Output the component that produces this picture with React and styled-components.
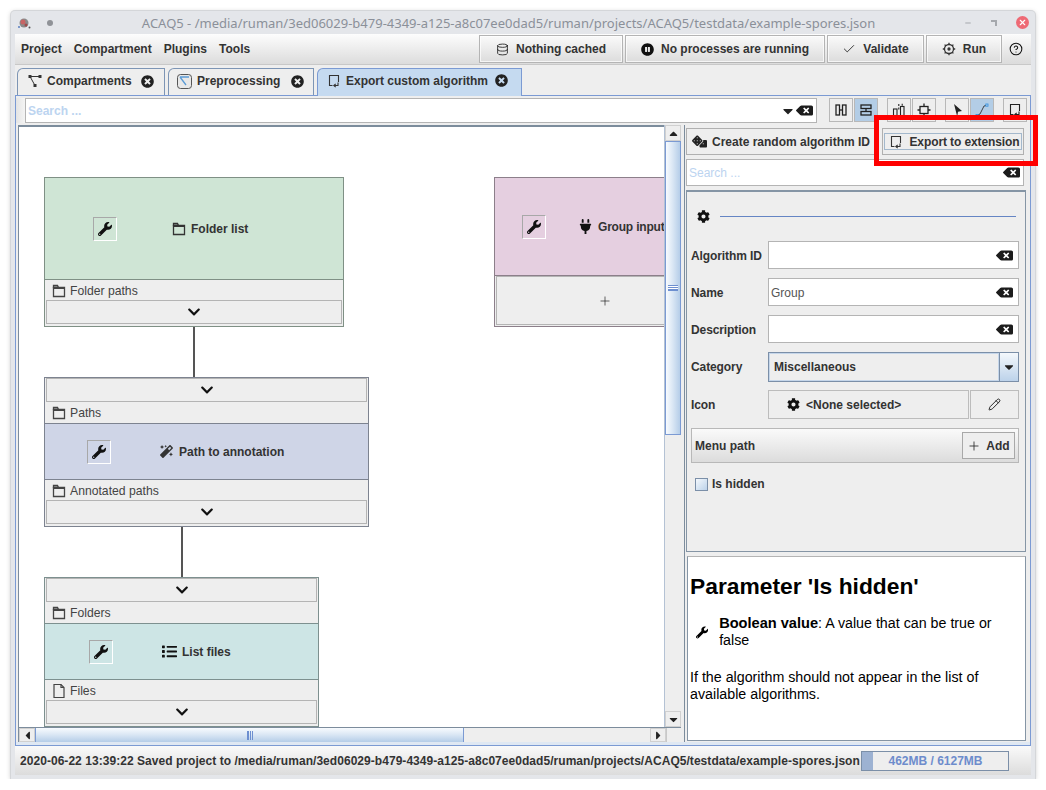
import React from "react";
import styled, { createGlobalStyle } from "styled-components";
import {
  FaWrench,
  FaCog,
  FaChevronDown,
  FaPlug,
  FaBackspace,
  FaList,
  FaDice,
  FaPauseCircle,
  FaMagic,
  FaTimesCircle,
  FaCaretDown,
  FaCaretUp,
  FaCaretLeft,
  FaCaretRight,
} from "react-icons/fa";
import { Check, Plus, CircleHelp, Database, Pencil, X, Minus } from "lucide-react";

const GlobalStyle = createGlobalStyle`
  html, body {
    margin: 0;
    padding: 0;
    background: #fff;
    font-family: "Liberation Sans", Arial, sans-serif;
    font-size: 12px;
    color: #333;
  }
  * { box-sizing: border-box; }
`;

const Window = styled.div`
  width: 1024px;
  height: 768px;
  margin: 11px 0 0 11px;
  display: flex;
  flex-direction: column;
  background: #e4e6ea;
  border-radius: 4px 4px 0 0;
  box-shadow: 0 0 0 1px #d4d6d9, 0 1px 5px rgba(0, 0, 0, 0.25);
  padding: 0 4px 4px;
`;

const TitleBar = styled.div`
  height: 23px;
  flex: none;
  display: flex;
  align-items: center;
  padding-left: 2px;
  color: #8b9099;
  font-family: "Noto Sans", sans-serif;
  font-size: 13px;
`;

const TitleDot = styled.span`
  width: 6px;
  height: 6px;
  border-radius: 50%;
  background: #8f9297;
  margin-left: 16px;
`;

const TitleText = styled.div`
  flex: 1;
  text-align: center;
  white-space: nowrap;
`;

const WinButtons = styled.div`
  display: flex;
  align-items: center;
  gap: 19px;
  margin-right: 2px;
  color: #a5a8ad;
`;

const CloseDot = styled.span`
  width: 13px;
  height: 13px;
  border-radius: 50%;
  background: #ee6a75;
  color: #fff;
  display: flex;
  align-items: center;
  justify-content: center;
`;

const Restore = styled.span`
  width: 6px;
  height: 6px;
  border-top: 2px solid #a5a8ad;
  border-right: 2px solid #a5a8ad;
`;

const MenuBar = styled.div`
  height: 31px;
  flex: none;
  display: flex;
  align-items: flex-start;
  padding-top: 1px;
  background: linear-gradient(#fdfdfd, #dcdcdc);
  border-bottom: 1px solid #c8c8c8;
`;

const MenuItems = styled.div`
  flex: 1;
  display: flex;
  gap: 12px;
  padding: 7px 0 0 6px;
  font-weight: bold;
  line-height: 14px;
`;

const TopButton = styled.div`
  width: ${(p) => p.$w}px;
  height: 28px;
  margin-left: 2px;
  display: flex;
  align-items: center;
  justify-content: center;
  gap: 7px;
  font-weight: bold;
  border: 1px solid #b4b4b4;
  box-shadow: inset 0 0 0 1px rgba(255, 255, 255, 0.7);
  background: linear-gradient(#fafafa, #dcdcdc);
  color: #333;
`;

const HelpButton = styled(TopButton)`
  border: none;
  box-shadow: none;
  padding-right: 3px;
  color: #111;
`;

const TabRow = styled.div`
  height: 30px;
  flex: none;
  display: flex;
  align-items: flex-end;
  gap: 3px;
  padding-left: 2px;
  background: #eeeeee;
`;

const Tab = styled.div`
  width: ${(p) => p.$w}px;
  height: ${(p) => (p.$active ? 28 : 27)}px;
  display: flex;
  align-items: center;
  gap: 5px;
  padding: 0 0 ${(p) => (p.$active ? 4 : 2)}px ${(p) => p.$pad}px;
  font-weight: bold;
  color: #333;
  background: ${(p) => (p.$active ? "#c5daf0" : "#eeeeee")};
  border: 1px solid #7d95b5;
  border-bottom: none;
  border-top-left-radius: 6px;
  ${(p) => p.$active && "border-color: #7b9ad3; margin-bottom: -1px; z-index: 1;"}
`;

const TabClose = styled.span`
  display: flex;
  margin-left: ${(p) => p.$gap}px;
  color: #222;
`;

const ContentPanel = styled.div`
  height: 651px;
  flex: none;
  display: flex;
  flex-direction: column;
  background: #dfe8f3;
  border: 1px solid #7b9ad3;
`;

const Toolbar = styled.div`
  height: 29px;
  flex: none;
  display: flex;
  align-items: flex-start;
  padding-top: 2px;
  background: #eeeeee;
`;

const Grip = styled.div`
  width: 9px;
  height: 25px;
  background: linear-gradient(90deg, #e4e4e4, #f4f4f4);
`;

const SearchBox = styled.div`
  width: ${(p) => p.$w}px;
  height: ${(p) => p.$h}px;
  flex: none;
  display: flex;
  align-items: center;
  padding: 0 3px 0 2px;
  background: #fff;
  border: 1px solid #b4b4b4;
`;

const Placeholder = styled.span`
  flex: 1;
  color: #bcd4f0;
  font-weight: ${(p) => (p.$bold ? "bold" : "normal")};
`;

const ToolGroup = styled.div`
  display: flex;
  gap: 1px;
  margin-left: ${(p) => p.$ml}px;
`;

const ToolButton = styled.div`
  width: 24px;
  height: 24px;
  display: flex;
  align-items: center;
  justify-content: center;
  background: ${(p) => (p.$on ? "#b3cde6" : "#eeeeee")};
  border: 1px solid #b8b8b8;
  color: #222;
`;

const Main = styled.div`
  height: 617px;
  flex: none;
  display: flex;
  padding-left: 2px;
  background: #eeeeee;
`;

const LeftColumn = styled.div`
  width: 663px;
  flex: none;
  display: flex;
  flex-direction: column;
  border-left: 1px solid #7c8c9c;
`;

const CanvasRow = styled.div`
  height: 602px;
  flex: none;
  display: flex;
`;

const Canvas = styled.div`
  position: relative;
  flex: 1;
  overflow: hidden;
  background: #fff;
  border-top: 2px solid #7c8c9c;
`;

const Node = styled.div`
  position: absolute;
  left: ${(p) => p.$x}px;
  top: ${(p) => p.$y}px;
  width: ${(p) => p.$w}px;
  height: ${(p) => p.$h}px;
  display: flex;
  flex-direction: column;
  background: #eeeeee;
  border: 1px solid ${(p) => p.$line};
`;

const NodeHeader = styled.div`
  height: ${(p) => p.$h}px;
  flex: none;
  display: flex;
  align-items: center;
  gap: ${(p) => p.$gap}px;
  padding-left: ${(p) => p.$pad}px;
  background: ${(p) => p.$bg};
  font-weight: bold;
  color: #333;
  border-bottom: 1px solid ${(p) => p.$line};
  border-top: ${(p) => (p.$top ? `1px solid ${p.$line}` : "none")};
  white-space: nowrap;
`;

const WrenchButton = styled.div`
  width: 24px;
  height: 24px;
  flex: none;
  display: flex;
  align-items: center;
  justify-content: center;
  border: 1px solid;
  border-color: #a8a8a8 #fff #fff #a8a8a8;
  color: #111;
`;

const NodeTitle = styled.span`
  display: flex;
  align-items: center;
  gap: ${(p) => p.$gap || 5}px;
  letter-spacing: ${(p) => (p.$tight ? "-0.2px" : "normal")};
`;

const Slot = styled.div`
  height: ${(p) => p.$h || 20}px;
  flex: none;
  display: flex;
  align-items: center;
  gap: 4px;
  padding: 1px 0 0 7px;
  color: #444;
  font-size: 12.2px;
`;

const SlotButton = styled.div`
  height: ${(p) => p.$h || 24}px;
  flex: none;
  margin: 0 1px;
  display: flex;
  align-items: center;
  justify-content: center;
  padding-right: ${(p) => p.$shift || 0}px;
  background: #eeeeee;
  border: 1px solid #b4b4b4;
  color: #111;
`;

const Edge = styled.div`
  position: absolute;
  left: ${(p) => p.$x}px;
  top: ${(p) => p.$y}px;
  width: 2px;
  height: 50px;
  background: #555;
`;

const VScroll = styled.div`
  width: 17px;
  flex: none;
  display: flex;
  flex-direction: column;
  background: #eeeeee;
  border-left: 1px solid #b4c2d4;
`;

const ArrowButton = styled.div`
  width: ${(p) => p.$w || 16}px;
  height: ${(p) => p.$h || 16}px;
  flex: none;
  display: flex;
  align-items: center;
  justify-content: center;
  background: #eeeeee;
  color: #222;
  border: 1px solid #d0d0d0;
`;

const VThumb = styled.div`
  height: 294px;
  flex: none;
  display: flex;
  align-items: center;
  justify-content: center;
  background: linear-gradient(90deg, #f8fbfe, #dce8f5 45%, #b5cde8);
  border: 1px solid #7b9ad3;
`;

const GripV = styled.div`
  width: 10px;
  height: 6px;
  border-top: 1px solid #6d8fd0;
  border-bottom: 1px solid #6d8fd0;
  background: linear-gradient(#fff 1px, #6d8fd0 1px, #6d8fd0 2px, #fff 2px);
  background-size: 100% 2px;
`;

const Track = styled.div`
  flex: 1;
`;

const HScroll = styled.div`
  height: 15px;
  flex: none;
  display: flex;
  background: #eeeeee;
  border-top: 1px solid #7c8c9c;
`;

const HThumb = styled.div`
  width: 429px;
  flex: none;
  display: flex;
  align-items: center;
  justify-content: center;
  background: linear-gradient(#f8fbfe, #dce8f5 45%, #b5cde8);
  border: 1px solid #7b9ad3;
  border-width: 0 1px;
`;

const GripH = styled.div`
  width: 6px;
  height: 9px;
  border-left: 1px solid #6d8fd0;
  border-right: 1px solid #6d8fd0;
  background: linear-gradient(90deg, #6d8fd0 1px, transparent 1px);
  background-size: 2px 100%;
`;

const Corner = styled.div`
  width: 15px;
  flex: none;
  border-left: 1px solid #c8c8c8;
`;

const RightColumn = styled.div`
  width: 345px;
  flex: none;
  margin-left: 3px;
  padding: 3px 0 0 1px;
  display: flex;
  flex-direction: column;
  border-left: 1px solid #7c8c9c;
`;

const ButtonRow = styled.div`
  height: 27px;
  flex: none;
  display: flex;
  gap: 6px;
  margin-bottom: 4px;
`;

const PlainButton = styled.div`
  width: ${(p) => p.$w}px;
  flex: none;
  display: flex;
  align-items: center;
  justify-content: center;
  gap: 5px;
  font-weight: bold;
  white-space: nowrap;
  background: #eeeeee;
  border: 1px solid #b0b0b0;
  color: #333;
`;

const FocusRing = styled.div`
  display: flex;
  align-items: center;
  gap: 6px;
  height: 17px;
  padding: 0 1px 0 4px;
  letter-spacing: -0.1px;
  border: 1px solid #a3b8cc;
`;

const FormPanel = styled.div`
  width: 340px;
  height: 362px;
  flex: none;
  margin-top: 4px;
  padding: 0 6px 0 4px;
  background: #eeeeee;
  border: 1px solid #8595a5;
  border-top-width: 2px;
`;

const SectionHead = styled.div`
  height: 49px;
  display: flex;
  align-items: center;
  gap: 10px;
  padding: 2px 3px 2px 6px;
  color: #111;
`;

const SectionLine = styled.div`
  flex: 1;
  height: 1px;
  background: #6585c4;
`;

const FormRow = styled.div`
  height: ${(p) => p.$h}px;
  margin-bottom: ${(p) => p.$mb}px;
  display: flex;
  align-items: center;
`;

const FieldLabel = styled.div`
  width: 77px;
  flex: none;
  padding-top: ${(p) => (p.$nudge ? 1 : 0)}px;
  font-weight: bold;
  letter-spacing: -0.1px;
  color: #333;
`;

const TextField = styled.div`
  flex: 1;
  height: 100%;
  display: flex;
  align-items: center;
  padding: 0 5px 0 2px;
  background: #fff;
  border: 1px solid #b4b4b4;
  color: #555;
`;

const FieldValue = styled.span`
  flex: 1;
  padding-top: 1px;
`;

const ComboBox = styled.div`
  flex: 1;
  height: 100%;
  display: flex;
  background: #eeeeee;
  border: 1px solid #7b8fa8;
  font-weight: bold;
`;

const ComboValue = styled.div`
  flex: 1;
  display: flex;
  align-items: center;
  padding-left: 5px;
  box-shadow: inset 0 0 0 1px #c5d6ea;
`;

const ComboArrow = styled.div`
  width: 19px;
  flex: none;
  display: flex;
  align-items: center;
  justify-content: center;
  background: linear-gradient(#f4f8fc, #bcd2ea);
  border-left: 1px solid #7b8fa8;
  color: #222;
`;

const IconPicker = styled.div`
  flex: 1;
  height: 100%;
  display: flex;
  align-items: center;
  gap: 6px;
  padding-left: 18px;
  font-weight: bold;
  border: 1px solid #bcbcbc;
  color: #333;
`;

const IconEdit = styled.div`
  width: 49px;
  height: 100%;
  flex: none;
  margin-left: 1px;
  display: flex;
  align-items: center;
  justify-content: center;
  color: #222;
  border: 1px solid #bcbcbc;
`;

const MenuPath = styled.div`
  height: 35px;
  margin-bottom: 14px;
  display: flex;
  align-items: center;
  justify-content: space-between;
  padding: 0 3px 0 3px;
  font-weight: bold;
  background: linear-gradient(#fafafa, #dcdcdc);
  border: 1px solid #b8b8b8;
`;

const AddButton = styled.div`
  width: 53px;
  height: 27px;
  display: flex;
  align-items: center;
  justify-content: center;
  gap: 5px;
  background: #eeeeee;
  border: 1px solid #a8a8a8;
`;

const CheckRow = styled.div`
  display: flex;
  align-items: center;
  gap: 4px;
  padding-left: 4px;
  font-weight: bold;
`;

const CheckBox = styled.span`
  width: 13px;
  height: 13px;
  background: linear-gradient(135deg, #f4f8fc, #bcd2ea);
  border: 1px solid #7b8fa8;
`;

const HelpPanel = styled.div`
  width: 339px;
  height: 185px;
  flex: none;
  margin: 4px 0 0 1px;
  padding: 16px 20px 0 2px;
  background: #fff;
  color: #000;
  font-size: 14.25px;
  line-height: 17px;
  border: 1px solid #8595a5;
  border-top-color: #b4b4b4;
`;

const HelpTitle = styled.h1`
  margin: 0 0 15px;
  font-size: 22.8px;
  line-height: 27px;
  font-weight: bold;
`;

const ParamRow = styled.div`
  display: flex;
  align-items: center;
  gap: 11px;
  padding-left: 6px;
  margin-bottom: 20px;
`;

const HelpText = styled.p`
  margin: 0;

  b {
    font-size: 14.6px;
  }
`;

const StatusBar = styled.div`
  flex: 1;
  display: flex;
  align-items: center;
  padding: 1px 0 0 5px;
  font-weight: bold;
  white-space: nowrap;
  color: #333;
  background: linear-gradient(#fafafa, #dcdcdc);
`;

const StatusText = styled.div`
  width: 841px;
  flex: none;
  overflow: hidden;
  letter-spacing: 0.045px;
`;

const MemoryBar = styled.div`
  width: 148px;
  height: 20px;
  display: flex;
  align-items: center;
  color: #6d8ccc;
  background: #eeeeee;
  border: 1px solid #7b8fa8;
`;

const MemoryFill = styled.div`
  height: 100%;
  background: #9db2d2;
`;

const MemoryText = styled.span`
  flex: 1;
  padding-right: 10px;
  text-align: center;
`;

// red marker drawn over the screenshot
const Highlight = styled.div`
  position: absolute;
  left: 874px;
  top: 115px;
  width: 164px;
  height: 51px;
  border: 5px solid #ff0000;
  pointer-events: none;
`;

const Line = ({ children, size = 14, sw = 1.3 }) => (
  <svg width={size} height={size} viewBox="0 0 14 14" fill="none" stroke="currentColor" strokeWidth={sw}>
    {children}
  </svg>
);

const FolderIcon = () => (
  <Line>
    <path d="M1.5 3.5h11v9h-11z" />
    <path d="M1.5 1.5h4l1 2h-5z" />
    <path d="M1.5 3.5h11v1.5h-11z" fill="currentColor" stroke="none" />
  </Line>
);

const FileIcon = () => (
  <svg width="14" height="16" viewBox="0 0 14 16" fill="none" stroke="currentColor" strokeWidth="1.2">
    <path d="M2 1.5h7l3 3v10h-10z" />
    <path d="M9 1.5v3h3" />
  </svg>
);

const ExportIcon = () => (
  <Line sw={1.1}>
    <path d="M11.5 8V1.5h-9v10h3" />
    <path d="M11 8.5v3H7M8.7 9.8L6.8 11.5l1.9 1.7" />
  </Line>
);

const GraphIcon = () => (
  <Line sw={1}>
    <path d="M2 2.5h10M2 2.5l5 9" />
    <rect x="1" y="1.5" width="2" height="2" fill="currentColor" />
    <rect x="11" y="1.5" width="2" height="2" fill="currentColor" />
    <rect x="6" y="10.5" width="2" height="2" fill="currentColor" />
  </Line>
);

const PipelineIcon = () => (
  <svg width="15" height="15" viewBox="0 0 15 15" fill="none">
    <rect x="0.5" y="0.5" width="14" height="14" rx="3" fill="#e8e8e8" stroke="#555" />
    <path d="M3 3h9M3 3l6 8" stroke="#5b9bd5" strokeWidth="1.3" />
  </svg>
);

const RunIcon = () => (
  <Line>
    <circle cx="7" cy="7" r="4.5" />
    <circle cx="7" cy="7" r="1" fill="currentColor" />
    <path d="M7 .8v1.7M7 11.5v1.7M.8 7h1.7M11.5 7h1.7M2.6 2.6l1.2 1.2M10.2 10.2l1.2 1.2M2.6 11.4l1.2-1.2M10.2 3.8l1.2-1.2" />
  </Line>
);

const AppIcon = () => (
  <svg width="14" height="14" viewBox="0 0 14 14">
    <circle cx="7" cy="7" r="4.5" fill="#8a8a8a" />
    <circle cx="6" cy="6" r="2.5" fill="#c86464" />
    <circle cx="9" cy="9" r="1.5" fill="#a04a4a" />
    <circle cx="2" cy="11" r="1" fill="#5b7fc0" />
    <circle cx="12.5" cy="11.5" r="1" fill="#555" />
  </svg>
);

const ClearIcon = ({ size = 17 }) => <FaBackspace size={size} color="#1c1c1c" />;

const ColumnsIcon = () => (
  <Line>
    <rect x="2" y="2" width="3.5" height="10" />
    <rect x="8.5" y="2" width="3.5" height="10" />
    <path d="M5.5 7h3" />
  </Line>
);

const RowsIcon = () => (
  <Line>
    <rect x="2" y="2" width="10" height="3.5" />
    <rect x="2" y="8.5" width="10" height="3.5" />
    <path d="M7 5.5v3" />
  </Line>
);

const AutoLayoutIcon = () => (
  <Line sw={1.1}>
    <rect x="1.5" y="6" width="3.5" height="6.5" />
    <rect x="8.5" y="3.5" width="3.5" height="9" />
    <path d="M6.8 1v2M6.8 4.5v2M10.2.8v2" />
  </Line>
);

const CenterIcon = () => (
  <Line>
    <rect x="3" y="3.5" width="8" height="7" />
    <path d="M7 .5v3M7 10.5v3M.5 7H3M11 7h2.5" />
  </Line>
);

const PointerIcon = () => (
  <svg width="14" height="14" viewBox="0 0 14 14">
    <path d="M4 1l8 7-4 .8-.8 4.7z" fill="#222" />
  </svg>
);

const CurveIcon = () => (
  <svg width="14" height="14" viewBox="0 0 14 14" fill="none">
    <path d="M3 12L5 11L9 3L11 2.5" stroke="#333" strokeWidth="0.9" />
    <rect x="1" y="11.5" width="2.2" height="2.2" stroke="#2f8fe0" strokeWidth="0.8" />
    <rect x="10.8" y="1" width="2.2" height="2.2" stroke="#2f8fe0" strokeWidth="0.8" />
  </svg>
);

const Wrench = () => (
  <WrenchButton>
    <FaWrench size={14} />
  </WrenchButton>
);

const Chevron = () => <FaChevronDown size={14} />;

const Canvasgraph = () => (
  <Canvas>
    <Edge $x={174} $y={200} />
    <Edge $x={162} $y={400} />

    <Node $x={25} $y={50} $w={300} $h={150} $line="#7f9085">
      <NodeHeader $h={102} $bg="#cfe5d5" $line="#7f9085" $pad={48} $gap={55}>
        <Wrench />
        <NodeTitle><FolderIcon />Folder list</NodeTitle>
      </NodeHeader>
      <Slot><FolderIcon />Folder paths</Slot>
      <SlotButton><Chevron /></SlotButton>
    </Node>

    <Node $x={25} $y={250} $w={325} $h={150} $line="#7d8390">
      <SlotButton><Chevron /></SlotButton>
      <Slot $h={21}><FolderIcon />Paths</Slot>
      <NodeHeader $h={57} $bg="#cfd5e7" $line="#7d8390" $top $pad={42} $gap={49}>
        <Wrench />
        <NodeTitle $gap={6}><FaMagic size={13} />Path to annotation</NodeTitle>
      </NodeHeader>
      <Slot><FolderIcon />Annotated paths</Slot>
      <SlotButton><Chevron /></SlotButton>
    </Node>

    <Node $x={25} $y={450} $w={275} $h={150} $line="#7d908f">
      <SlotButton><Chevron /></SlotButton>
      <Slot $h={21}><FolderIcon />Folders</Slot>
      <NodeHeader $h={57} $bg="#cde5e5" $line="#7d908f" $top $pad={44} $gap={49}>
        <Wrench />
        <NodeTitle><FaList size={15} color="#111" />List files</NodeTitle>
      </NodeHeader>
      <Slot><FileIcon />Files</Slot>
      <SlotButton><Chevron /></SlotButton>
    </Node>

    <Node $x={475} $y={50} $w={300} $h={150} $line="#8c7f8a">
      <NodeHeader $h={98} $bg="#e5cfe0" $line="#8c7f8a" $pad={27} $gap={32}>
        <Wrench />
        <NodeTitle $tight><FaPlug size={15} color="#111" />Group input</NodeTitle>
      </NodeHeader>
      <SlotButton $h={49} $shift={78}><Plus size={14} strokeWidth={1.2} color="#222" /></SlotButton>
    </Node>
  </Canvas>
);

export default function App() {
  return (
    <>
      <GlobalStyle />
      <Window>
        <TitleBar>
          <AppIcon />
          <TitleDot />
          <TitleText>
            ACAQ5 - /media/ruman/3ed06029-b479-4349-a125-a8c07ee0dad5/ruman/projects/ACAQ5/testdata/example-spores.json
          </TitleText>
          <WinButtons>
            <Minus size={8} strokeWidth={3} />
            <Restore />
            <CloseDot><X size={9} strokeWidth={3} /></CloseDot>
          </WinButtons>
        </TitleBar>

        <MenuBar>
          <MenuItems>
            <span>Project</span>
            <span>Compartment</span>
            <span>Plugins</span>
            <span>Tools</span>
          </MenuItems>
          <TopButton $w={144}><Database size={13} strokeWidth={1.6} color="#222" />Nothing cached</TopButton>
          <TopButton $w={200}><FaPauseCircle size={13} color="#111" />No processes are running</TopButton>
          <TopButton $w={97}><Check size={14} strokeWidth={1.5} color="#222" />Validate</TopButton>
          <TopButton $w={76}><RunIcon />Run</TopButton>
          <HelpButton $w={27}><CircleHelp size={14} strokeWidth={1.8} /></HelpButton>
        </MenuBar>

        <TabRow>
          <Tab $w={148} $pad={10}>
            <GraphIcon />Compartments
            <TabClose $gap={4}><FaTimesCircle size={13} /></TabClose>
          </Tab>
          <Tab $w={146} $pad={8}>
            <PipelineIcon />Preprocessing
            <TabClose $gap={6}><FaTimesCircle size={13} /></TabClose>
          </Tab>
          <Tab $w={205} $pad={9} $active>
            <ExportIcon />Export custom algorithm
            <TabClose $gap={2}><FaTimesCircle size={13} /></TabClose>
          </Tab>
        </TabRow>

        <ContentPanel>
          <Toolbar>
            <Grip />
            <SearchBox $w={792} $h={25}>
              <Placeholder $bold>Search ...</Placeholder>
              <FaCaretDown size={16} color="#222" />
              <ClearIcon />
            </SearchBox>
            <ToolGroup $ml={12}>
              <ToolButton><ColumnsIcon /></ToolButton>
              <ToolButton $on><RowsIcon /></ToolButton>
            </ToolGroup>
            <ToolGroup $ml={9}>
              <ToolButton><AutoLayoutIcon /></ToolButton>
              <ToolButton><CenterIcon /></ToolButton>
            </ToolGroup>
            <ToolGroup $ml={9}>
              <ToolButton><PointerIcon /></ToolButton>
              <ToolButton $on><CurveIcon /></ToolButton>
            </ToolGroup>
            <ToolGroup $ml={9}>
              <ToolButton><ExportIcon /></ToolButton>
            </ToolGroup>
          </Toolbar>

          <Main>
            <LeftColumn>
              <CanvasRow>
                <Canvasgraph />
                <VScroll>
                  <ArrowButton><FaCaretUp size={13} /></ArrowButton>
                  <VThumb><GripV /></VThumb>
                  <Track />
                  <ArrowButton><FaCaretDown size={13} /></ArrowButton>
                </VScroll>
              </CanvasRow>
              <HScroll>
                <ArrowButton $h={14}><FaCaretLeft size={13} /></ArrowButton>
                <HThumb><GripH /></HThumb>
                <Track />
                <ArrowButton $h={14}><FaCaretRight size={13} /></ArrowButton>
                <Corner />
              </HScroll>
            </LeftColumn>

            <RightColumn>
              <ButtonRow>
                <PlainButton $w={190}><FaDice size={15} color="#222" />Create random algorithm ID</PlainButton>
                <PlainButton $w={142}>
                  <FocusRing><ExportIcon />Export to extension</FocusRing>
                </PlainButton>
              </ButtonRow>
              <SearchBox $w={338} $h={27}>
                <Placeholder>Search ...</Placeholder>
                <ClearIcon />
              </SearchBox>

              <FormPanel>
                <SectionHead>
                  <FaCog size={13} />
                  <SectionLine />
                </SectionHead>
                <FormRow $h={28} $mb={9}>
                  <FieldLabel $nudge>Algorithm ID</FieldLabel>
                  <TextField><FieldValue /><ClearIcon /></TextField>
                </FormRow>
                <FormRow $h={28} $mb={9}>
                  <FieldLabel $nudge>Name</FieldLabel>
                  <TextField><FieldValue>Group</FieldValue><ClearIcon /></TextField>
                </FormRow>
                <FormRow $h={28} $mb={9}>
                  <FieldLabel $nudge>Description</FieldLabel>
                  <TextField><FieldValue /><ClearIcon /></TextField>
                </FormRow>
                <FormRow $h={30} $mb={8}>
                  <FieldLabel>Category</FieldLabel>
                  <ComboBox>
                    <ComboValue>Miscellaneous</ComboValue>
                    <ComboArrow><FaCaretDown size={14} /></ComboArrow>
                  </ComboBox>
                </FormRow>
                <FormRow $h={29} $mb={9}>
                  <FieldLabel>Icon</FieldLabel>
                  <IconPicker><FaCog size={13} color="#111" />&lt;None selected&gt;</IconPicker>
                  <IconEdit><Pencil size={13} strokeWidth={1.8} /></IconEdit>
                </FormRow>
                <MenuPath>
                  Menu path
                  <AddButton><Plus size={14} strokeWidth={1.4} color="#222" />Add</AddButton>
                </MenuPath>
                <CheckRow><CheckBox />Is hidden</CheckRow>
              </FormPanel>

              <HelpPanel>
                <HelpTitle>Parameter 'Is hidden'</HelpTitle>
                <ParamRow>
                  <FaWrench size={13} />
                  <HelpText><b>Boolean value</b>: A value that can be true or false</HelpText>
                </ParamRow>
                <HelpText>If the algorithm should not appear in the list of available algorithms.</HelpText>
              </HelpPanel>
            </RightColumn>
          </Main>
        </ContentPanel>

        <StatusBar>
          <StatusText>
            2020-06-22 13:39:22 Saved project to /media/ruman/3ed06029-b479-4349-a125-a8c07ee0dad5/ruman/projects/ACAQ5/testdata/example-spores.json
          </StatusText>
          <MemoryBar>
            <MemoryFill style={{ width: `${(462 / 6127) * 100}%` }} />
            <MemoryText>462MB / 6127MB</MemoryText>
          </MemoryBar>
        </StatusBar>
      </Window>
      <Highlight />
    </>
  );
}
